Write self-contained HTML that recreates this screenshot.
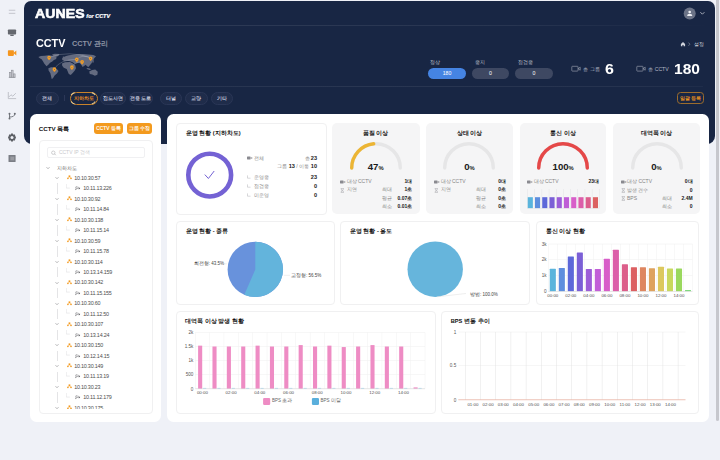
<!DOCTYPE html>
<html><head><meta charset="utf-8">
<style>
*{margin:0;padding:0;box-sizing:border-box}
html,body{width:720px;height:460px;overflow:hidden;background:#eff1f7;font-family:"Liberation Sans",sans-serif;color:#222}
.a{position:absolute}
.t{position:absolute;white-space:nowrap;line-height:1}
#hdr{left:24px;top:1.2px;width:691px;height:143px;background:#182644;border-radius:7px 7px 8px 8px}
.card{position:absolute;background:#fff;border-radius:6.5px}
.sub{position:absolute;background:#fff;border:1px solid #f0f0f1;border-radius:4px}
.gcard{position:absolute;background:#f5f5f6;border-radius:5px}
.pill{position:absolute;white-space:nowrap;height:12.5px;border-radius:7px;background:#1f2c4a;border:0.7px solid #2a3656;color:#dadde5;font-size:5px;font-weight:normal;-webkit-text-stroke:0.1px #dadde5;text-align:center;line-height:11.3px}
.btno{position:absolute;white-space:nowrap;height:11.2px;border-radius:3px;background:#f39a1e;color:#fff;font-size:4.8px;font-weight:normal;-webkit-text-stroke:0.15px #fff;text-align:center;line-height:11.8px}
.tree{position:absolute;font-size:5.6px;color:#555}
.ttl{position:absolute;font-size:6.5px;font-weight:bold;color:#111;white-space:nowrap;line-height:1}
</style></head><body>
<!-- sidebar -->
<svg class="a" style="left:0;top:0" width="24" height="180">
 <rect x="8.8" y="9.7" width="6.5" height="1.2" fill="#cbcdd4"/>
 <rect x="8.8" y="12.8" width="6.5" height="1.2" fill="#cbcdd4"/>
 <rect x="7.9" y="29.4" width="8.2" height="5.2" rx="0.8" fill="#65686f"/>
 <rect x="10.3" y="34.6" width="3.4" height="1.4" fill="#65686f"/>
 <rect x="7.9" y="50.3" width="6" height="5.6" rx="0.8" fill="#f5961e"/>
 <path d="M13.5 53.1 L16.3 50.6 L16.3 55.6 Z" fill="#f5961e"/>
 <path d="M8.8 77.4 H15.3" stroke="#8a8d94" stroke-width="0.7"/>
 <rect x="9.5" y="72.6" width="1.6" height="4.6" stroke="#8a8d94" stroke-width="0.6" fill="#c9cbd1"/>
 <rect x="11.5" y="70.2" width="1.6" height="7" stroke="#8a8d94" stroke-width="0.6" fill="#c9cbd1"/>
 <rect x="13.5" y="73.9" width="1.6" height="3.3" stroke="#8a8d94" stroke-width="0.6" fill="#c9cbd1"/>
 <path d="M8.3 92 V98.6 H16.1 M8.8 97 L11 94.8 L12.8 96.2 L15.8 93.2" stroke="#b5b8bf" stroke-width="0.8" fill="none"/>
 <circle cx="9.5" cy="113.8" r="1" fill="#6b6e75"/><circle cx="9.5" cy="118.5" r="1" fill="#6b6e75"/><circle cx="14.8" cy="113.8" r="1" fill="#6b6e75"/>
 <path d="M9.5 113.8 V118.5 M9.5 117 Q14.8 117 14.8 113.8" stroke="#6b6e75" stroke-width="0.9" fill="none"/>
 <g transform="translate(12 137.5)"><path d="M-0.9 -3.9 H0.9 L1.2 -2.8 L2.3 -3.3 L3.3 -2.3 L2.8 -1.2 L3.9 -0.9 V0.9 L2.8 1.2 L3.3 2.3 L2.3 3.3 L1.2 2.8 L0.9 3.9 H-0.9 L-1.2 2.8 L-2.3 3.3 L-3.3 2.3 L-2.8 1.2 L-3.9 0.9 V-0.9 L-2.8 -1.2 L-3.3 -2.3 L-2.3 -3.3 L-1.2 -2.8 Z" fill="#5d6066"/><circle r="1.5" fill="#eff1f7"/></g>
 <rect x="8.5" y="155" width="7.1" height="7" rx="0.6" fill="#7b7e85"/>
 <rect x="10.3" y="156.6" width="4" height="3.8" fill="#9a9ca2"/>
</svg>
<!-- scrollbar -->
<div class="a" style="left:716.1px;top:-3px;width:2.6px;height:424px;background:#c6c7cd;border-radius:2px"></div>

<div id="hdr" class="a"></div>

<!-- header contents -->
<div class="t" style="left:35px;top:8.2px;font-size:12.8px;font-weight:bold;color:#fff;letter-spacing:0.1px;-webkit-text-stroke:0.6px #fff;transform:scaleX(1.1);transform-origin:left">AUNES</div>
<div class="t" style="left:86.3px;top:13.6px;font-size:5.5px;font-weight:bold;font-style:italic;color:#fff;-webkit-text-stroke:0.2px #fff">for CCTV</div>
<div class="a" style="left:28px;top:25px;width:683px;height:0.8px;background:linear-gradient(90deg,rgba(255,255,255,0.03),rgba(255,255,255,0.085) 30%,rgba(255,255,255,0.07) 70%,rgba(255,255,255,0))"></div>
<svg class="a" style="left:680px;top:5px" width="30" height="18">
 <circle cx="9.7" cy="8.4" r="6" fill="#6b7387"/>
 <circle cx="9.7" cy="7" r="1.35" fill="#eceef3"/>
 <path d="M7.1 10.9 Q7.1 8.8 9.7 8.8 Q12.3 8.8 12.3 10.9 Z" fill="#eceef3"/>
 <path d="M20.4 7.2 L22.4 9.2 L24.4 7.2" stroke="#a9aebb" stroke-width="1" fill="none"/>
</svg>
<div class="t" style="left:36.2px;top:38.8px;font-size:10.4px;font-weight:bold;color:#fff;transform:scaleX(1.04);transform-origin:left">CCTV</div>
<div class="t" style="left:72px;top:40.4px;font-size:7.3px;color:#8e94a4;font-weight:bold">CCTV 관리</div>
<svg class="a" style="left:679px;top:40px" width="12" height="8">
 <path d="M1.9 3.9 L4 1.9 L6.1 3.9 V6.3 H4.6 V5 H3.4 V6.3 H1.9 Z" fill="#d0d3dc"/>
 <path d="M9.5 2.6 L10.9 4.2 L9.5 5.8" stroke="#9aa0ae" stroke-width="0.6" fill="none"/>
</svg>
<div class="t" style="left:694.3px;top:41.5px;font-size:5px;color:#d4d7df">설정</div>
<!-- world map -->
<svg class="a" style="left:34px;top:50px" width="70" height="32" viewBox="0 0 720 329">
<g fill="#646b80"><path d="M45 72 L70 62 L110 58 L150 54 L190 60 L212 62 L232 72 L228 92 L205 104 L188 118 L165 132 L150 148 L135 162 L128 168 L118 155 L105 138 L92 115 L78 96 L60 84 Z"/><path d="M185 45 L215 38 L262 40 L250 62 L222 72 L200 62 Z"/><path d="M148 188 L175 178 L205 178 L235 195 L252 215 L238 238 L212 262 L195 290 L182 298 L175 268 L168 238 L150 210 Z"/><path d="M288 90 L300 74 L330 62 L360 55 L400 50 L450 44 L500 42 L560 46 L610 52 L638 64 L620 84 L605 108 L592 136 L575 158 L560 176 L545 166 L532 152 L515 165 L500 176 L486 152 L466 132 L440 136 L418 142 L398 126 L370 116 L342 110 L312 114 L292 104 Z"/><path d="M288 138 L318 126 L370 124 L400 138 L424 158 L432 188 L418 214 L398 236 L378 256 L358 248 L346 218 L336 196 L306 182 L290 162 Z"/><path d="M568 222 L598 206 L630 200 L656 224 L652 254 L626 266 L600 252 L574 246 Z"/><path d="M598 92 L612 96 L614 126 L604 134 Z"/><path d="M540 185 L565 188 L590 198 L570 205 L545 196 Z"/><path d="M295 70 L308 66 L310 80 L298 84 Z"/></g>
<g stroke="rgba(255,255,255,0.5)" stroke-width="4" fill="none">
<path d="M155 75 Q360 0 582 80"/>
<path d="M210 195 Q260 100 440 95"/>
<path d="M390 175 Q420 120 495 120"/>
<path d="M440 95 Q500 40 582 80"/>
</g>
<path d="M155 106 C143 92 136 86 136 77 A19 19 0 0 1 174 77 C174 86 167 92 155 106 Z" fill="#f39a1e"/><circle cx="155" cy="77" r="10" fill="#f6b34e"/><circle cx="155" cy="77" r="5.5" fill="#6e5a3a"/><path d="M210 226 C198 212 191 206 191 197 A19 19 0 0 1 229 197 C229 206 222 212 210 226 Z" fill="#f39a1e"/><circle cx="210" cy="197" r="10" fill="#f6b34e"/><circle cx="210" cy="197" r="5.5" fill="#6e5a3a"/><path d="M390 206 C378 192 371 186 371 177 A19 19 0 0 1 409 177 C409 186 402 192 390 206 Z" fill="#f39a1e"/><circle cx="390" cy="177" r="10" fill="#f6b34e"/><circle cx="390" cy="177" r="5.5" fill="#6e5a3a"/><path d="M440 126 C428 112 421 106 421 97 A19 19 0 0 1 459 97 C459 106 452 112 440 126 Z" fill="#f39a1e"/><circle cx="440" cy="97" r="10" fill="#f6b34e"/><circle cx="440" cy="97" r="5.5" fill="#6e5a3a"/><path d="M495 151 C483 137 476 131 476 122 A19 19 0 0 1 514 122 C514 131 507 137 495 151 Z" fill="#f39a1e"/><circle cx="495" cy="122" r="10" fill="#f6b34e"/><circle cx="495" cy="122" r="5.5" fill="#6e5a3a"/><path d="M582 114 C570 100 563 94 563 85 A19 19 0 0 1 601 85 C601 94 594 100 582 114 Z" fill="#f39a1e"/><circle cx="582" cy="85" r="10" fill="#f6b34e"/><circle cx="582" cy="85" r="5.5" fill="#6e5a3a"/>
</svg>
<!-- status pills -->
<div class="t" style="left:430px;top:59.8px;font-size:5px;color:#c4c8d2">정상</div>
<div class="t" style="left:474.5px;top:59.8px;font-size:5px;color:#c4c8d2">중지</div>
<div class="t" style="left:518px;top:59.8px;font-size:5px;color:#c4c8d2">점검중</div>
<div class="a" style="left:428.2px;top:68.1px;width:37.7px;height:10.7px;border-radius:6px;background:#4584e3;color:#fff;font-size:5.2px;text-align:center;line-height:10.7px">180</div>
<div class="a" style="left:471.7px;top:68.1px;width:37.4px;height:10.7px;border-radius:6px;background:#3e4862;color:#fff;font-size:5.2px;text-align:center;line-height:10.7px">0</div>
<div class="a" style="left:515.1px;top:68.1px;width:37.8px;height:10.7px;border-radius:6px;background:#3e4862;color:#fff;font-size:5.2px;text-align:center;line-height:10.7px">0</div>
<svg class="a" style="left:570px;top:64px" width="12" height="10">
 <rect x="1.8" y="2.3" width="6.2" height="4.8" rx="0.6" stroke="#a6abb8" stroke-width="0.6" fill="none"/>
 <path d="M8 4.7 L10.2 3.2 V6.2 Z" stroke="#a6abb8" stroke-width="0.6" fill="none"/>
</svg>
<div class="t" style="left:583.3px;top:66.6px;font-size:5.2px;color:#b5b9c5">총 그룹</div>
<div class="t" style="left:604.7px;top:62px;font-size:14.5px;font-weight:bold;color:#fff;transform:scaleX(1.1);transform-origin:left">6</div>
<svg class="a" style="left:634.5px;top:64px" width="12" height="10">
 <rect x="1.8" y="2.3" width="6.2" height="4.8" rx="0.6" stroke="#a6abb8" stroke-width="0.6" fill="none"/>
 <path d="M8 4.7 L10.2 3.2 V6.2 Z" stroke="#a6abb8" stroke-width="0.6" fill="none"/>
</svg>
<div class="t" style="left:648.2px;top:66.6px;font-size:5.2px;color:#b5b9c5">총 CCTV</div>
<div class="t" style="left:673.7px;top:62px;font-size:14.5px;font-weight:bold;color:#fff;transform:scaleX(1.07);transform-origin:left">180</div>
<div class="a" style="left:30px;top:86px;width:673px;height:1px;background:linear-gradient(90deg,rgba(255,255,255,0.06),rgba(255,255,255,0.075) 50%,rgba(255,255,255,0.06) 90%,rgba(255,255,255,0.03))"></div>
<!-- tabs -->
<div class="pill" style="left:36.2px;top:92.2px;width:22.5px">전체</div>
<div class="a" style="left:64.2px;top:95.2px;width:0.5px;height:6.2px;background:#2c3757"></div>
<div class="pill" style="left:70.1px;top:91.9px;width:28.2px;height:12.8px;border:1.1px solid #c8822a;color:#ee8d20;line-height:10.8px;background:#182644;font-weight:bold;-webkit-text-stroke:0">지하차도</div>
<svg class="a" style="left:68px;top:90px" width="33" height="17"><defs><filter id="gl" x="-50%" y="-50%" width="200%" height="200%"><feGaussianBlur stdDeviation="0.5"/></filter></defs>
<g stroke="#f3d69a" stroke-width="1.1" fill="none" filter="url(#gl)" opacity="0.9">
<path d="M6.6 2.6 A5.6 5.6 0 0 0 3.1 5"/><path d="M3.1 11.5 A5.6 5.6 0 0 0 6.6 14"/>
<path d="M23.7 2.6 A5.6 5.6 0 0 1 27.2 5"/><path d="M27.2 11.5 A5.6 5.6 0 0 1 23.7 14"/>
</g></svg>
<div class="pill" style="left:99.9px;top:92.2px;width:25.9px">접도사면</div>
<div class="pill" style="left:129px;top:92.2px;width:23.5px">전용 도로</div>
<div class="pill" style="left:159.5px;top:92.2px;width:22.2px">터널</div>
<div class="pill" style="left:185px;top:92.2px;width:22.5px">교량</div>
<div class="pill" style="left:210.5px;top:92.2px;width:22.5px">기타</div>
<div class="a" style="left:677px;top:92px;width:26.6px;height:11.9px;border:0.8px solid #9c6c2c;border-radius:3.5px;color:#e8901e;font-size:5px;font-weight:bold;white-space:nowrap;text-align:center;line-height:10.6px">일괄 등록</div>

<!-- left card -->
<div class="card" style="left:30px;top:114.4px;width:131px;height:307.7px"></div>
<div class="ttl" style="left:38.8px;top:125.6px;font-size:6.2px">CCTV 목록</div>
<div class="btno" style="left:94px;top:123.3px;width:29.1px">CCTV 등록</div>
<div class="btno" style="left:126.7px;top:123.3px;width:25.6px">그룹 수정</div>
<div class="sub" style="left:38.9px;top:140px;width:114px;height:274.2px"></div>
<div class="a" style="left:47.2px;top:147.4px;width:97.4px;height:10.3px;border:0.7px solid #f0f0f2;border-radius:2px"></div>
<svg class="a" style="left:50px;top:149.5px" width="8" height="7"><circle cx="3.3" cy="2.7" r="1.7" stroke="#b0b0b4" stroke-width="0.6" fill="none"/><path d="M4.5 3.9 L5.8 5.2" stroke="#b0b0b4" stroke-width="0.7"/></svg>
<div class="t" style="left:58.9px;top:150.4px;font-size:5px;color:#c9c9cd">CCTV IP 검색</div>
<div class="a" style="left:40px;top:160px;width:111px;height:249px;overflow:hidden">
<svg class="a" style="left:6.35px;top:5.70px" width="4" height="4"><path d="M0.5 1.2 L2 2.7 L3.5 1.2" stroke="#77777b" stroke-width="0.55" fill="none"/></svg>
<div class="t" style="left:17.299999999999997px;top:5.55px;font-size:5px;color:#666">지하차도</div>
<svg class="a" style="left:15.45px;top:16.15px" width="4" height="4"><path d="M0.5 1.2 L2 2.7 L3.5 1.2" stroke="#77777b" stroke-width="0.55" fill="none"/></svg>
<svg class="a" style="left:26.5px;top:15.35px" width="5" height="5"><rect x="1.6" y="0.4" width="1.7" height="1.6" fill="#f39a1e"/><circle cx="0.9" cy="3.4" r="0.8" fill="#f39a1e"/><circle cx="4" cy="3.4" r="0.8" fill="#f39a1e"/><path d="M2.45 1.8 L0.9 3.4 M2.45 1.8 L4 3.4" stroke="#f39a1e" stroke-width="0.5"/></svg>
<div class="t" style="left:34.2px;top:15.90px;font-size:5.4px;letter-spacing:-0.22px;color:#4d4d4d">10.10.30.57</div>
<div class="a" style="left:17.15px;top:23.40px;width:0.6px;height:10.45px;background:#e4e4e6"></div>
<svg class="a" style="left:26.099999999999994px;top:23.90px" width="5" height="5"><path d="M0.3 0 V4.1 H3.8" stroke="#d8d8da" stroke-width="0.5" fill="none"/></svg>
<svg class="a" style="left:35.3px;top:26.30px" width="6" height="5"><path d="M1 0.6 L4.2 1.6 L3.8 2.9 L0.6 1.9 Z" stroke="#6a6a6e" stroke-width="0.45" fill="none"/><path d="M4.1 2 L5.1 1.7 L5 3.2 L3.9 2.8" fill="#6a6a6e"/><path d="M1.8 2.3 L1.4 3.4 H0.4 M0.4 2.6 V4.1" stroke="#6a6a6e" stroke-width="0.45" fill="none"/></svg>
<div class="t" style="left:43.2px;top:26.35px;font-size:5.4px;letter-spacing:-0.22px;color:#4d4d4d">10.11.13.226</div>
<svg class="a" style="left:15.45px;top:37.05px" width="4" height="4"><path d="M0.5 1.2 L2 2.7 L3.5 1.2" stroke="#77777b" stroke-width="0.55" fill="none"/></svg>
<svg class="a" style="left:26.5px;top:36.25px" width="5" height="5"><rect x="1.6" y="0.4" width="1.7" height="1.6" fill="#f39a1e"/><circle cx="0.9" cy="3.4" r="0.8" fill="#f39a1e"/><circle cx="4" cy="3.4" r="0.8" fill="#f39a1e"/><path d="M2.45 1.8 L0.9 3.4 M2.45 1.8 L4 3.4" stroke="#f39a1e" stroke-width="0.5"/></svg>
<div class="t" style="left:34.2px;top:36.80px;font-size:5.4px;letter-spacing:-0.22px;color:#4d4d4d">10.10.30.92</div>
<div class="a" style="left:17.15px;top:44.30px;width:0.6px;height:10.45px;background:#e4e4e6"></div>
<svg class="a" style="left:26.099999999999994px;top:44.80px" width="5" height="5"><path d="M0.3 0 V4.1 H3.8" stroke="#d8d8da" stroke-width="0.5" fill="none"/></svg>
<svg class="a" style="left:35.3px;top:47.20px" width="6" height="5"><path d="M1 0.6 L4.2 1.6 L3.8 2.9 L0.6 1.9 Z" stroke="#6a6a6e" stroke-width="0.45" fill="none"/><path d="M4.1 2 L5.1 1.7 L5 3.2 L3.9 2.8" fill="#6a6a6e"/><path d="M1.8 2.3 L1.4 3.4 H0.4 M0.4 2.6 V4.1" stroke="#6a6a6e" stroke-width="0.45" fill="none"/></svg>
<div class="t" style="left:43.2px;top:47.25px;font-size:5.4px;letter-spacing:-0.22px;color:#4d4d4d">10.11.14.84</div>
<svg class="a" style="left:15.45px;top:57.95px" width="4" height="4"><path d="M0.5 1.2 L2 2.7 L3.5 1.2" stroke="#77777b" stroke-width="0.55" fill="none"/></svg>
<svg class="a" style="left:26.5px;top:57.15px" width="5" height="5"><rect x="1.6" y="0.4" width="1.7" height="1.6" fill="#f39a1e"/><circle cx="0.9" cy="3.4" r="0.8" fill="#f39a1e"/><circle cx="4" cy="3.4" r="0.8" fill="#f39a1e"/><path d="M2.45 1.8 L0.9 3.4 M2.45 1.8 L4 3.4" stroke="#f39a1e" stroke-width="0.5"/></svg>
<div class="t" style="left:34.2px;top:57.70px;font-size:5.4px;letter-spacing:-0.22px;color:#4d4d4d">10.10.30.138</div>
<div class="a" style="left:17.15px;top:65.20px;width:0.6px;height:10.45px;background:#e4e4e6"></div>
<svg class="a" style="left:26.099999999999994px;top:65.70px" width="5" height="5"><path d="M0.3 0 V4.1 H3.8" stroke="#d8d8da" stroke-width="0.5" fill="none"/></svg>
<svg class="a" style="left:35.3px;top:68.10px" width="6" height="5"><path d="M1 0.6 L4.2 1.6 L3.8 2.9 L0.6 1.9 Z" stroke="#6a6a6e" stroke-width="0.45" fill="none"/><path d="M4.1 2 L5.1 1.7 L5 3.2 L3.9 2.8" fill="#6a6a6e"/><path d="M1.8 2.3 L1.4 3.4 H0.4 M0.4 2.6 V4.1" stroke="#6a6a6e" stroke-width="0.45" fill="none"/></svg>
<div class="t" style="left:43.2px;top:68.15px;font-size:5.4px;letter-spacing:-0.22px;color:#4d4d4d">10.11.15.14</div>
<svg class="a" style="left:15.45px;top:78.85px" width="4" height="4"><path d="M0.5 1.2 L2 2.7 L3.5 1.2" stroke="#77777b" stroke-width="0.55" fill="none"/></svg>
<svg class="a" style="left:26.5px;top:78.05px" width="5" height="5"><rect x="1.6" y="0.4" width="1.7" height="1.6" fill="#f39a1e"/><circle cx="0.9" cy="3.4" r="0.8" fill="#f39a1e"/><circle cx="4" cy="3.4" r="0.8" fill="#f39a1e"/><path d="M2.45 1.8 L0.9 3.4 M2.45 1.8 L4 3.4" stroke="#f39a1e" stroke-width="0.5"/></svg>
<div class="t" style="left:34.2px;top:78.60px;font-size:5.4px;letter-spacing:-0.22px;color:#4d4d4d">10.10.30.59</div>
<div class="a" style="left:17.15px;top:86.10px;width:0.6px;height:10.45px;background:#e4e4e6"></div>
<svg class="a" style="left:26.099999999999994px;top:86.60px" width="5" height="5"><path d="M0.3 0 V4.1 H3.8" stroke="#d8d8da" stroke-width="0.5" fill="none"/></svg>
<svg class="a" style="left:35.3px;top:89.00px" width="6" height="5"><path d="M1 0.6 L4.2 1.6 L3.8 2.9 L0.6 1.9 Z" stroke="#6a6a6e" stroke-width="0.45" fill="none"/><path d="M4.1 2 L5.1 1.7 L5 3.2 L3.9 2.8" fill="#6a6a6e"/><path d="M1.8 2.3 L1.4 3.4 H0.4 M0.4 2.6 V4.1" stroke="#6a6a6e" stroke-width="0.45" fill="none"/></svg>
<div class="t" style="left:43.2px;top:89.05px;font-size:5.4px;letter-spacing:-0.22px;color:#4d4d4d">10.11.15.78</div>
<svg class="a" style="left:15.45px;top:99.75px" width="4" height="4"><path d="M0.5 1.2 L2 2.7 L3.5 1.2" stroke="#77777b" stroke-width="0.55" fill="none"/></svg>
<svg class="a" style="left:26.5px;top:98.95px" width="5" height="5"><rect x="1.6" y="0.4" width="1.7" height="1.6" fill="#f39a1e"/><circle cx="0.9" cy="3.4" r="0.8" fill="#f39a1e"/><circle cx="4" cy="3.4" r="0.8" fill="#f39a1e"/><path d="M2.45 1.8 L0.9 3.4 M2.45 1.8 L4 3.4" stroke="#f39a1e" stroke-width="0.5"/></svg>
<div class="t" style="left:34.2px;top:99.50px;font-size:5.4px;letter-spacing:-0.22px;color:#4d4d4d">10.10.30.114</div>
<div class="a" style="left:17.15px;top:107.00px;width:0.6px;height:10.45px;background:#e4e4e6"></div>
<svg class="a" style="left:26.099999999999994px;top:107.50px" width="5" height="5"><path d="M0.3 0 V4.1 H3.8" stroke="#d8d8da" stroke-width="0.5" fill="none"/></svg>
<svg class="a" style="left:35.3px;top:109.90px" width="6" height="5"><path d="M1 0.6 L4.2 1.6 L3.8 2.9 L0.6 1.9 Z" stroke="#6a6a6e" stroke-width="0.45" fill="none"/><path d="M4.1 2 L5.1 1.7 L5 3.2 L3.9 2.8" fill="#6a6a6e"/><path d="M1.8 2.3 L1.4 3.4 H0.4 M0.4 2.6 V4.1" stroke="#6a6a6e" stroke-width="0.45" fill="none"/></svg>
<div class="t" style="left:43.2px;top:109.95px;font-size:5.4px;letter-spacing:-0.22px;color:#4d4d4d">10.13.14.159</div>
<svg class="a" style="left:15.45px;top:120.65px" width="4" height="4"><path d="M0.5 1.2 L2 2.7 L3.5 1.2" stroke="#77777b" stroke-width="0.55" fill="none"/></svg>
<svg class="a" style="left:26.5px;top:119.85px" width="5" height="5"><rect x="1.6" y="0.4" width="1.7" height="1.6" fill="#f39a1e"/><circle cx="0.9" cy="3.4" r="0.8" fill="#f39a1e"/><circle cx="4" cy="3.4" r="0.8" fill="#f39a1e"/><path d="M2.45 1.8 L0.9 3.4 M2.45 1.8 L4 3.4" stroke="#f39a1e" stroke-width="0.5"/></svg>
<div class="t" style="left:34.2px;top:120.40px;font-size:5.4px;letter-spacing:-0.22px;color:#4d4d4d">10.10.30.142</div>
<div class="a" style="left:17.15px;top:127.90px;width:0.6px;height:10.45px;background:#e4e4e6"></div>
<svg class="a" style="left:26.099999999999994px;top:128.40px" width="5" height="5"><path d="M0.3 0 V4.1 H3.8" stroke="#d8d8da" stroke-width="0.5" fill="none"/></svg>
<svg class="a" style="left:35.3px;top:130.80px" width="6" height="5"><path d="M1 0.6 L4.2 1.6 L3.8 2.9 L0.6 1.9 Z" stroke="#6a6a6e" stroke-width="0.45" fill="none"/><path d="M4.1 2 L5.1 1.7 L5 3.2 L3.9 2.8" fill="#6a6a6e"/><path d="M1.8 2.3 L1.4 3.4 H0.4 M0.4 2.6 V4.1" stroke="#6a6a6e" stroke-width="0.45" fill="none"/></svg>
<div class="t" style="left:43.2px;top:130.85px;font-size:5.4px;letter-spacing:-0.22px;color:#4d4d4d">10.11.15.155</div>
<svg class="a" style="left:15.45px;top:141.55px" width="4" height="4"><path d="M0.5 1.2 L2 2.7 L3.5 1.2" stroke="#77777b" stroke-width="0.55" fill="none"/></svg>
<svg class="a" style="left:26.5px;top:140.75px" width="5" height="5"><rect x="1.6" y="0.4" width="1.7" height="1.6" fill="#f39a1e"/><circle cx="0.9" cy="3.4" r="0.8" fill="#f39a1e"/><circle cx="4" cy="3.4" r="0.8" fill="#f39a1e"/><path d="M2.45 1.8 L0.9 3.4 M2.45 1.8 L4 3.4" stroke="#f39a1e" stroke-width="0.5"/></svg>
<div class="t" style="left:34.2px;top:141.30px;font-size:5.4px;letter-spacing:-0.22px;color:#4d4d4d">10.10.30.60</div>
<div class="a" style="left:17.15px;top:148.80px;width:0.6px;height:10.45px;background:#e4e4e6"></div>
<svg class="a" style="left:26.099999999999994px;top:149.30px" width="5" height="5"><path d="M0.3 0 V4.1 H3.8" stroke="#d8d8da" stroke-width="0.5" fill="none"/></svg>
<svg class="a" style="left:35.3px;top:151.70px" width="6" height="5"><path d="M1 0.6 L4.2 1.6 L3.8 2.9 L0.6 1.9 Z" stroke="#6a6a6e" stroke-width="0.45" fill="none"/><path d="M4.1 2 L5.1 1.7 L5 3.2 L3.9 2.8" fill="#6a6a6e"/><path d="M1.8 2.3 L1.4 3.4 H0.4 M0.4 2.6 V4.1" stroke="#6a6a6e" stroke-width="0.45" fill="none"/></svg>
<div class="t" style="left:43.2px;top:151.75px;font-size:5.4px;letter-spacing:-0.22px;color:#4d4d4d">10.11.12.50</div>
<svg class="a" style="left:15.45px;top:162.45px" width="4" height="4"><path d="M0.5 1.2 L2 2.7 L3.5 1.2" stroke="#77777b" stroke-width="0.55" fill="none"/></svg>
<svg class="a" style="left:26.5px;top:161.65px" width="5" height="5"><rect x="1.6" y="0.4" width="1.7" height="1.6" fill="#f39a1e"/><circle cx="0.9" cy="3.4" r="0.8" fill="#f39a1e"/><circle cx="4" cy="3.4" r="0.8" fill="#f39a1e"/><path d="M2.45 1.8 L0.9 3.4 M2.45 1.8 L4 3.4" stroke="#f39a1e" stroke-width="0.5"/></svg>
<div class="t" style="left:34.2px;top:162.20px;font-size:5.4px;letter-spacing:-0.22px;color:#4d4d4d">10.10.30.107</div>
<div class="a" style="left:17.15px;top:169.70px;width:0.6px;height:10.45px;background:#e4e4e6"></div>
<svg class="a" style="left:26.099999999999994px;top:170.20px" width="5" height="5"><path d="M0.3 0 V4.1 H3.8" stroke="#d8d8da" stroke-width="0.5" fill="none"/></svg>
<svg class="a" style="left:35.3px;top:172.60px" width="6" height="5"><path d="M1 0.6 L4.2 1.6 L3.8 2.9 L0.6 1.9 Z" stroke="#6a6a6e" stroke-width="0.45" fill="none"/><path d="M4.1 2 L5.1 1.7 L5 3.2 L3.9 2.8" fill="#6a6a6e"/><path d="M1.8 2.3 L1.4 3.4 H0.4 M0.4 2.6 V4.1" stroke="#6a6a6e" stroke-width="0.45" fill="none"/></svg>
<div class="t" style="left:43.2px;top:172.65px;font-size:5.4px;letter-spacing:-0.22px;color:#4d4d4d">10.13.14.24</div>
<svg class="a" style="left:15.45px;top:183.35px" width="4" height="4"><path d="M0.5 1.2 L2 2.7 L3.5 1.2" stroke="#77777b" stroke-width="0.55" fill="none"/></svg>
<svg class="a" style="left:26.5px;top:182.55px" width="5" height="5"><rect x="1.6" y="0.4" width="1.7" height="1.6" fill="#f39a1e"/><circle cx="0.9" cy="3.4" r="0.8" fill="#f39a1e"/><circle cx="4" cy="3.4" r="0.8" fill="#f39a1e"/><path d="M2.45 1.8 L0.9 3.4 M2.45 1.8 L4 3.4" stroke="#f39a1e" stroke-width="0.5"/></svg>
<div class="t" style="left:34.2px;top:183.10px;font-size:5.4px;letter-spacing:-0.22px;color:#4d4d4d">10.10.30.150</div>
<div class="a" style="left:17.15px;top:190.60px;width:0.6px;height:10.45px;background:#e4e4e6"></div>
<svg class="a" style="left:26.099999999999994px;top:191.10px" width="5" height="5"><path d="M0.3 0 V4.1 H3.8" stroke="#d8d8da" stroke-width="0.5" fill="none"/></svg>
<svg class="a" style="left:35.3px;top:193.50px" width="6" height="5"><path d="M1 0.6 L4.2 1.6 L3.8 2.9 L0.6 1.9 Z" stroke="#6a6a6e" stroke-width="0.45" fill="none"/><path d="M4.1 2 L5.1 1.7 L5 3.2 L3.9 2.8" fill="#6a6a6e"/><path d="M1.8 2.3 L1.4 3.4 H0.4 M0.4 2.6 V4.1" stroke="#6a6a6e" stroke-width="0.45" fill="none"/></svg>
<div class="t" style="left:43.2px;top:193.55px;font-size:5.4px;letter-spacing:-0.22px;color:#4d4d4d">10.12.14.15</div>
<svg class="a" style="left:15.45px;top:204.25px" width="4" height="4"><path d="M0.5 1.2 L2 2.7 L3.5 1.2" stroke="#77777b" stroke-width="0.55" fill="none"/></svg>
<svg class="a" style="left:26.5px;top:203.45px" width="5" height="5"><rect x="1.6" y="0.4" width="1.7" height="1.6" fill="#f39a1e"/><circle cx="0.9" cy="3.4" r="0.8" fill="#f39a1e"/><circle cx="4" cy="3.4" r="0.8" fill="#f39a1e"/><path d="M2.45 1.8 L0.9 3.4 M2.45 1.8 L4 3.4" stroke="#f39a1e" stroke-width="0.5"/></svg>
<div class="t" style="left:34.2px;top:204.00px;font-size:5.4px;letter-spacing:-0.22px;color:#4d4d4d">10.10.30.149</div>
<div class="a" style="left:17.15px;top:211.50px;width:0.6px;height:10.45px;background:#e4e4e6"></div>
<svg class="a" style="left:26.099999999999994px;top:212.00px" width="5" height="5"><path d="M0.3 0 V4.1 H3.8" stroke="#d8d8da" stroke-width="0.5" fill="none"/></svg>
<svg class="a" style="left:35.3px;top:214.40px" width="6" height="5"><path d="M1 0.6 L4.2 1.6 L3.8 2.9 L0.6 1.9 Z" stroke="#6a6a6e" stroke-width="0.45" fill="none"/><path d="M4.1 2 L5.1 1.7 L5 3.2 L3.9 2.8" fill="#6a6a6e"/><path d="M1.8 2.3 L1.4 3.4 H0.4 M0.4 2.6 V4.1" stroke="#6a6a6e" stroke-width="0.45" fill="none"/></svg>
<div class="t" style="left:43.2px;top:214.45px;font-size:5.4px;letter-spacing:-0.22px;color:#4d4d4d">10.11.13.19</div>
<svg class="a" style="left:15.45px;top:225.15px" width="4" height="4"><path d="M0.5 1.2 L2 2.7 L3.5 1.2" stroke="#77777b" stroke-width="0.55" fill="none"/></svg>
<svg class="a" style="left:26.5px;top:224.35px" width="5" height="5"><rect x="1.6" y="0.4" width="1.7" height="1.6" fill="#f39a1e"/><circle cx="0.9" cy="3.4" r="0.8" fill="#f39a1e"/><circle cx="4" cy="3.4" r="0.8" fill="#f39a1e"/><path d="M2.45 1.8 L0.9 3.4 M2.45 1.8 L4 3.4" stroke="#f39a1e" stroke-width="0.5"/></svg>
<div class="t" style="left:34.2px;top:224.90px;font-size:5.4px;letter-spacing:-0.22px;color:#4d4d4d">10.10.30.23</div>
<div class="a" style="left:17.15px;top:232.40px;width:0.6px;height:10.45px;background:#e4e4e6"></div>
<svg class="a" style="left:26.099999999999994px;top:232.90px" width="5" height="5"><path d="M0.3 0 V4.1 H3.8" stroke="#d8d8da" stroke-width="0.5" fill="none"/></svg>
<svg class="a" style="left:35.3px;top:235.30px" width="6" height="5"><path d="M1 0.6 L4.2 1.6 L3.8 2.9 L0.6 1.9 Z" stroke="#6a6a6e" stroke-width="0.45" fill="none"/><path d="M4.1 2 L5.1 1.7 L5 3.2 L3.9 2.8" fill="#6a6a6e"/><path d="M1.8 2.3 L1.4 3.4 H0.4 M0.4 2.6 V4.1" stroke="#6a6a6e" stroke-width="0.45" fill="none"/></svg>
<div class="t" style="left:43.2px;top:235.35px;font-size:5.4px;letter-spacing:-0.22px;color:#4d4d4d">10.11.12.179</div>
<svg class="a" style="left:15.45px;top:246.05px" width="4" height="4"><path d="M0.5 1.2 L2 2.7 L3.5 1.2" stroke="#77777b" stroke-width="0.55" fill="none"/></svg>
<svg class="a" style="left:26.5px;top:245.25px" width="5" height="5"><rect x="1.6" y="0.4" width="1.7" height="1.6" fill="#f39a1e"/><circle cx="0.9" cy="3.4" r="0.8" fill="#f39a1e"/><circle cx="4" cy="3.4" r="0.8" fill="#f39a1e"/><path d="M2.45 1.8 L0.9 3.4 M2.45 1.8 L4 3.4" stroke="#f39a1e" stroke-width="0.5"/></svg>
<div class="t" style="left:34.2px;top:245.80px;font-size:5.4px;letter-spacing:-0.22px;color:#4d4d4d">10.10.30.175</div>
</div>
<!-- right card -->
<div class="card" style="left:166.9px;top:113.6px;width:542px;height:308.6px"></div>
<!-- right content -->
<div class="sub" style="left:176.2px;top:123px;width:151px;height:92.2px"></div>
<div class="ttl" style="left:185.7px;top:131.10px;font-size:5.7px">운영 현황 (지하차도)</div>
<svg class="a" style="left:184px;top:149px" width="52" height="52">
<circle cx="25.7" cy="26.1" r="21.4" stroke="#7462d4" stroke-width="4.6" fill="none"/>
<path d="M20.8 25.6 L24.4 29.5 L30.2 22" stroke="#7462d4" stroke-width="1" fill="none"/>
</svg>
<svg class="a" style="left:247.3px;top:156.0px" width="6" height="4"><rect x="0" y="0.6" width="3.6" height="2.8" rx="0.4" fill="#8a8a90"/><path d="M3.6 2 L5.2 1 V3 Z" fill="#8a8a90"/></svg>
<div class="t" style="left:254.20px;top:155.75px;font-size:5.3px;color:#808080;">전체</div>
<div class="t" style="left:304.70px;top:155.75px;font-size:5.3px;color:#858585;">총</div>
<div class="t" style="right:403.00px;top:155.50px;font-size:5.6px;color:#222;font-weight:bold;">23</div>
<div class="t" style="right:403px;top:164.40px;font-size:5.3px;color:#858585">그룹 <b style="color:#222;font-size:5.6px">13</b> / 이동 <b style="color:#222;font-size:5.6px">10</b></div>
<svg class="a" style="left:247.4px;top:175.4px" width="5" height="4"><path d="M0.5 0.4 V3.2 H3.5" stroke="#b0b0b4" stroke-width="0.5" fill="none"/></svg>
<div class="t" style="left:253.90px;top:175.15px;font-size:5.3px;color:#858585;">운영중</div>
<div class="t" style="right:403.00px;top:174.90px;font-size:5.6px;color:#222;font-weight:bold;">23</div>
<svg class="a" style="left:247.4px;top:184.0px" width="5" height="4"><path d="M0.5 0.4 V3.2 H3.5" stroke="#b0b0b4" stroke-width="0.5" fill="none"/></svg>
<div class="t" style="left:253.90px;top:183.75px;font-size:5.3px;color:#858585;">점검중</div>
<div class="t" style="right:403.00px;top:183.50px;font-size:5.6px;color:#222;font-weight:bold;">0</div>
<svg class="a" style="left:247.4px;top:193.1px" width="5" height="4"><path d="M0.5 0.4 V3.2 H3.5" stroke="#b0b0b4" stroke-width="0.5" fill="none"/></svg>
<div class="t" style="left:253.90px;top:192.85px;font-size:5.3px;color:#858585;">미운영</div>
<div class="t" style="right:403.00px;top:192.60px;font-size:5.6px;color:#222;font-weight:bold;">0</div>
<div class="gcard" style="left:331.9px;top:123.3px;width:87.7px;height:91.1px"></div>
<div class="ttl" style="left:331.9px;width:87.5px;text-align:center;top:130.70px;font-size:5.7px">품질 이상</div>
<svg class="a" style="left:345.65px;top:137.70px" width="60" height="34"><path d="M5.70 30.00 A24.3 24.3 0 0 1 54.30 30.00" stroke="#e6e6e7" stroke-width="3.4" fill="none" stroke-linecap="round"/><path d="M5.70 30.00 A24.3 24.3 0 0 1 27.71 5.81" stroke="#ecb534" stroke-width="3.4" fill="none" stroke-linecap="round"/></svg>
<div class="t" style="left:331.9px;width:87.5px;text-align:center;top:161.8px;font-size:9.6px;font-weight:bold;color:#1a1a1a">47<span style="font-size:5.8px">%</span></div>
<div class="gcard" style="left:425.8px;top:123.3px;width:87.7px;height:91.1px"></div>
<div class="ttl" style="left:425.6px;width:87.7px;text-align:center;top:130.70px;font-size:5.7px">상태 이상</div>
<svg class="a" style="left:439.45px;top:137.70px" width="60" height="34"><path d="M5.70 30.00 A24.3 24.3 0 0 1 54.30 30.00" stroke="#e6e6e7" stroke-width="3.4" fill="none" stroke-linecap="round"/></svg>
<div class="t" style="left:425.6px;width:87.7px;text-align:center;top:161.8px;font-size:9.6px;font-weight:bold;color:#1a1a1a">0<span style="font-size:5.8px">%</span></div>
<div class="gcard" style="left:519.6px;top:123.3px;width:86.9px;height:91.1px"></div>
<div class="ttl" style="left:519.7px;width:87.0px;text-align:center;top:130.70px;font-size:5.7px">통신 이상</div>
<svg class="a" style="left:533.20px;top:137.70px" width="60" height="34"><path d="M5.70 30.00 A24.3 24.3 0 0 1 54.30 30.00" stroke="#e6e6e7" stroke-width="3.4" fill="none" stroke-linecap="round"/><path d="M5.70 30.00 A24.3 24.3 0 0 1 54.30 30.00" stroke="#e54848" stroke-width="3.4" fill="none" stroke-linecap="round"/></svg>
<div class="t" style="left:519.7px;width:87.0px;text-align:center;top:161.8px;font-size:9.6px;font-weight:bold;color:#1a1a1a">100<span style="font-size:5.8px">%</span></div>
<div class="gcard" style="left:612.8px;top:123.3px;width:86.8px;height:91.1px"></div>
<div class="ttl" style="left:613.3px;width:86.4px;text-align:center;top:130.70px;font-size:5.7px">대역폭 이상</div>
<svg class="a" style="left:626.50px;top:137.70px" width="60" height="34"><path d="M5.70 30.00 A24.3 24.3 0 0 1 54.30 30.00" stroke="#e6e6e7" stroke-width="3.4" fill="none" stroke-linecap="round"/></svg>
<div class="t" style="left:613.3px;width:86.4px;text-align:center;top:161.8px;font-size:9.6px;font-weight:bold;color:#1a1a1a">0<span style="font-size:5.8px">%</span></div>
<svg class="a" style="left:340.0px;top:179.5px" width="6" height="4"><rect x="0" y="0.6" width="3.6" height="2.8" rx="0.4" fill="#8a8a90"/><path d="M3.6 2 L5.2 1 V3 Z" fill="#8a8a90"/></svg>
<div class="t" style="left:346.60px;top:179.00px;font-size:5px;color:#858585;">대상 CCTV</div>
<div class="t" style="right:307.70px;top:179.00px;font-size:5px;color:#222;font-weight:bold;">1대</div>
<svg class="a" style="left:340.0px;top:187.5px" width="5" height="5"><path d="M0.8 0.4 H3.8 M0.8 4.4 H3.8 M1.2 0.4 Q1.2 2.4 2.3 2.4 Q3.4 2.4 3.4 0.4 M1.2 4.4 Q1.2 2.4 2.3 2.4 Q3.4 2.4 3.4 4.4" stroke="#9a9aa0" stroke-width="0.45" fill="none"/></svg>
<div class="t" style="left:346.60px;top:187.30px;font-size:5px;color:#858585;">지연</div>
<div class="t" style="left:381.60px;top:187.30px;font-size:5px;color:#858585;">최대</div>
<div class="t" style="right:307.70px;top:187.30px;font-size:5px;color:#222;font-weight:bold;">1초</div>
<div class="t" style="left:381.60px;top:195.80px;font-size:5px;color:#858585;">평균</div>
<div class="t" style="right:307.70px;top:195.80px;font-size:5px;color:#222;font-weight:bold;">0.07초</div>
<div class="t" style="left:381.60px;top:204.00px;font-size:5px;color:#858585;">최소</div>
<div class="t" style="right:307.70px;top:204.00px;font-size:5px;color:#222;font-weight:bold;">0.01초</div>
<svg class="a" style="left:434.0px;top:179.5px" width="6" height="4"><rect x="0" y="0.6" width="3.6" height="2.8" rx="0.4" fill="#8a8a90"/><path d="M3.6 2 L5.2 1 V3 Z" fill="#8a8a90"/></svg>
<div class="t" style="left:440.60px;top:179.00px;font-size:5px;color:#858585;">대상 CCTV</div>
<div class="t" style="right:214.00px;top:179.00px;font-size:5px;color:#222;font-weight:bold;">0대</div>
<svg class="a" style="left:434.0px;top:187.5px" width="5" height="5"><path d="M0.8 0.4 H3.8 M0.8 4.4 H3.8 M1.2 0.4 Q1.2 2.4 2.3 2.4 Q3.4 2.4 3.4 0.4 M1.2 4.4 Q1.2 2.4 2.3 2.4 Q3.4 2.4 3.4 4.4" stroke="#9a9aa0" stroke-width="0.45" fill="none"/></svg>
<div class="t" style="left:440.60px;top:187.30px;font-size:5px;color:#858585;">지연</div>
<div class="t" style="left:475.60px;top:187.30px;font-size:5px;color:#858585;">최대</div>
<div class="t" style="right:214.00px;top:187.30px;font-size:5px;color:#222;font-weight:bold;">0초</div>
<div class="t" style="left:475.60px;top:195.80px;font-size:5px;color:#858585;">평균</div>
<div class="t" style="right:214.00px;top:195.80px;font-size:5px;color:#222;font-weight:bold;">0초</div>
<div class="t" style="left:475.60px;top:204.00px;font-size:5px;color:#858585;">최소</div>
<div class="t" style="right:214.00px;top:204.00px;font-size:5px;color:#222;font-weight:bold;">0초</div>
<svg class="a" style="left:526.9px;top:179.6px" width="6" height="4"><rect x="0" y="0.6" width="3.6" height="2.8" rx="0.4" fill="#8a8a90"/><path d="M3.6 2 L5.2 1 V3 Z" fill="#8a8a90"/></svg>
<div class="t" style="left:533.50px;top:179.10px;font-size:5px;color:#858585;">대상 CCTV</div>
<div class="t" style="right:121.00px;top:179.10px;font-size:5px;color:#222;font-weight:bold;">23대</div>

<svg class="a" style="left:527px;top:189px" width="73" height="20"><rect x="0.30" y="0" width="0.45" height="19.5" fill="#e2e2e4"/><rect x="7.48" y="0" width="0.45" height="19.5" fill="#e2e2e4"/><rect x="14.66" y="0" width="0.45" height="19.5" fill="#e2e2e4"/><rect x="21.84" y="0" width="0.45" height="19.5" fill="#e2e2e4"/><rect x="29.02" y="0" width="0.45" height="19.5" fill="#e2e2e4"/><rect x="36.20" y="0" width="0.45" height="19.5" fill="#e2e2e4"/><rect x="43.38" y="0" width="0.45" height="19.5" fill="#e2e2e4"/><rect x="50.56" y="0" width="0.45" height="19.5" fill="#e2e2e4"/><rect x="57.74" y="0" width="0.45" height="19.5" fill="#e2e2e4"/><rect x="64.92" y="0" width="0.45" height="19.5" fill="#e2e2e4"/><rect x="72.10" y="0" width="0.45" height="19.5" fill="#e2e2e4"/><rect x="0" y="0" width="72" height="19.5" fill="#fff" style="display:none"/><rect x="0.75" y="8.2" width="5.1" height="11" fill="#5ab4dc"/><rect x="7.99" y="8.2" width="5.1" height="11" fill="#5e8ede"/><rect x="15.23" y="8.2" width="5.1" height="11" fill="#5d68d9"/><rect x="22.47" y="8.2" width="5.1" height="11" fill="#7b5fd6"/><rect x="29.71" y="8.2" width="5.1" height="11" fill="#9b5dd8"/><rect x="36.95" y="8.2" width="5.1" height="11" fill="#bf5ed6"/><rect x="44.19" y="8.2" width="5.1" height="11" fill="#d85ec9"/><rect x="51.43" y="8.2" width="5.1" height="11" fill="#dc5ea9"/><rect x="58.67" y="8.2" width="5.1" height="11" fill="#dc5e8c"/><rect x="65.91" y="8.2" width="5.1" height="11" fill="#dc6161"/><rect x="0" y="19.2" width="72" height="0.4" fill="#e0e0e2"/></svg>
<svg class="a" style="left:620.5px;top:179.6px" width="6" height="4"><rect x="0" y="0.6" width="3.6" height="2.8" rx="0.4" fill="#8a8a90"/><path d="M3.6 2 L5.2 1 V3 Z" fill="#8a8a90"/></svg>
<div class="t" style="left:627.00px;top:179.10px;font-size:5px;color:#858585;">대상 CCTV</div>
<div class="t" style="right:27.40px;top:179.10px;font-size:5px;color:#222;font-weight:bold;">0대</div>
<svg class="a" style="left:620.5px;top:187.7px" width="5" height="5"><path d="M0.8 0.4 H3.8 M0.8 4.4 H3.8 M1.2 0.4 Q1.2 2.4 2.3 2.4 Q3.4 2.4 3.4 0.4 M1.2 4.4 Q1.2 2.4 2.3 2.4 Q3.4 2.4 3.4 4.4" stroke="#9a9aa0" stroke-width="0.45" fill="none"/></svg>
<div class="t" style="left:627.00px;top:187.50px;font-size:5px;color:#858585;">발생 건수</div>
<div class="t" style="right:27.40px;top:187.50px;font-size:5px;color:#222;font-weight:bold;">0</div>
<svg class="a" style="left:620.5px;top:196.2px" width="5" height="5"><path d="M0.8 0.4 H3.8 M0.8 4.4 H3.8 M1.2 0.4 Q1.2 2.4 2.3 2.4 Q3.4 2.4 3.4 0.4 M1.2 4.4 Q1.2 2.4 2.3 2.4 Q3.4 2.4 3.4 4.4" stroke="#9a9aa0" stroke-width="0.45" fill="none"/></svg>
<div class="t" style="left:627.00px;top:196.00px;font-size:5px;color:#858585;">BPS</div>
<div class="t" style="left:662.00px;top:196.00px;font-size:5px;color:#858585;">최대</div>
<div class="t" style="right:27.40px;top:196.00px;font-size:5px;color:#222;font-weight:bold;">2.4M</div>
<div class="t" style="left:662.00px;top:204.10px;font-size:5px;color:#858585;">최소</div>
<div class="t" style="right:27.40px;top:204.10px;font-size:5px;color:#222;font-weight:bold;">0</div>
<!-- rows 2-3 -->
<div class="sub" style="left:176.2px;top:221.2px;width:159px;height:84.1px"></div>
<div class="ttl" style="left:185.5px;top:229.00px;font-size:5.7px">운영 현황 - 종류</div>
<div class="sub" style="left:340.3px;top:221.3px;width:189.4px;height:84px"></div>
<div class="ttl" style="left:349.8px;top:229.00px;font-size:5.7px">운영 현황 - 용도</div>
<div class="sub" style="left:536.4px;top:221.3px;width:163px;height:84px"></div>
<div class="ttl" style="left:545.8px;top:228.60px;font-size:5.7px">통신 이상 현황</div>
<svg class="a" style="left:0;top:0" width="720" height="460">
<circle cx="255.3" cy="269.4" r="27.7" fill="#6892dc"/>
<path d="M255.3 269.4 L255.3 241.7 A27.7 27.7 0 1 1 244.30 294.82 Z" fill="#63b4dc"/>
<path d="M223.9 263.8 H226.8" stroke="#ddd" stroke-width="0.5"/>
<path d="M284 275.3 H290" stroke="#ddd" stroke-width="0.5"/>
<circle cx="435.2" cy="269.2" r="27.7" fill="#66b5dc"/>
<path d="M437 296.8 L466 293.5" stroke="#ddd" stroke-width="0.5" fill="none"/>
</svg>
<div class="t" style="left:193.75px;top:262.30px;font-size:4.5px;color:#444;">회전형: 43.5%</div>
<div class="t" style="left:291.00px;top:273.80px;font-size:4.5px;color:#444;">고정형: 56.5%</div>
<div class="t" style="left:470.00px;top:292.50px;font-size:4.5px;color:#444;">방범: 100.0%</div>
<svg class="a" style="left:0;top:0" width="720" height="460"><rect x="548.3" y="243.8" width="144.20000000000005" height="0.45" fill="#ececec"/><rect x="548.3" y="259.3" width="144.20000000000005" height="0.45" fill="#ececec"/><rect x="548.3" y="275.3" width="144.20000000000005" height="0.45" fill="#ececec"/><rect x="548.3" y="291.0" width="144.20000000000005" height="0.45" fill="#ececec"/><rect x="548.10" y="244" width="0.45" height="47.2" fill="#efefef"/><rect x="557.11" y="244" width="0.45" height="47.2" fill="#efefef"/><rect x="566.12" y="244" width="0.45" height="47.2" fill="#efefef"/><rect x="575.14" y="244" width="0.45" height="47.2" fill="#efefef"/><rect x="584.15" y="244" width="0.45" height="47.2" fill="#efefef"/><rect x="593.16" y="244" width="0.45" height="47.2" fill="#efefef"/><rect x="602.17" y="244" width="0.45" height="47.2" fill="#efefef"/><rect x="611.19" y="244" width="0.45" height="47.2" fill="#efefef"/><rect x="620.20" y="244" width="0.45" height="47.2" fill="#efefef"/><rect x="629.21" y="244" width="0.45" height="47.2" fill="#efefef"/><rect x="638.22" y="244" width="0.45" height="47.2" fill="#efefef"/><rect x="647.24" y="244" width="0.45" height="47.2" fill="#efefef"/><rect x="656.25" y="244" width="0.45" height="47.2" fill="#efefef"/><rect x="665.26" y="244" width="0.45" height="47.2" fill="#efefef"/><rect x="674.27" y="244" width="0.45" height="47.2" fill="#efefef"/><rect x="683.29" y="244" width="0.45" height="47.2" fill="#efefef"/><rect x="692.30" y="244" width="0.45" height="47.2" fill="#efefef"/><rect x="549.76" y="268.70" width="6.1" height="22.50" fill="#5ab4dc" rx="0.5"/><rect x="558.77" y="267.91" width="6.1" height="23.29" fill="#5e8ede" rx="0.5"/><rect x="567.78" y="256.59" width="6.1" height="34.61" fill="#5d68d9" rx="0.5"/><rect x="576.79" y="252.50" width="6.1" height="38.70" fill="#7b5fd6" rx="0.5"/><rect x="585.81" y="269.02" width="6.1" height="22.18" fill="#9d5dd8" rx="0.5"/><rect x="594.82" y="269.02" width="6.1" height="22.18" fill="#c25ed8" rx="0.5"/><rect x="603.83" y="258.63" width="6.1" height="32.57" fill="#d85ec9" rx="0.5"/><rect x="612.84" y="249.82" width="6.1" height="41.38" fill="#dc5ea9" rx="0.5"/><rect x="621.86" y="264.30" width="6.1" height="26.90" fill="#dc5e8a" rx="0.5"/><rect x="630.87" y="267.13" width="6.1" height="24.07" fill="#dc5f62" rx="0.5"/><rect x="639.88" y="267.13" width="6.1" height="24.07" fill="#de8660" rx="0.5"/><rect x="648.89" y="268.23" width="6.1" height="22.97" fill="#dea25e" rx="0.5"/><rect x="657.91" y="266.66" width="6.1" height="24.54" fill="#dcc85e" rx="0.5"/><rect x="666.92" y="268.54" width="6.1" height="22.66" fill="#c8d85e" rx="0.5"/><rect x="675.93" y="268.54" width="6.1" height="22.66" fill="#9ad85e" rx="0.5"/><rect x="684.94" y="289.94" width="6.1" height="1.26" fill="#80d880" rx="0.5"/><rect x="548.3" y="291" width="144.20000000000005" height="0.5" fill="#d8d8d8"/></svg>
<div class="t" style="right:173.50px;top:242.95px;font-size:4.6px;color:#555;">3k</div>
<div class="t" style="right:173.50px;top:258.45px;font-size:4.6px;color:#555;">2k</div>
<div class="t" style="right:173.50px;top:274.45px;font-size:4.6px;color:#555;">1k</div>
<div class="t" style="right:173.50px;top:290.15px;font-size:4.6px;color:#555;">0</div>
<div class="t" style="left:532.81px;width:40px;text-align:center;top:293.55px;font-size:4.4px;color:#505050;">00:00</div>
<div class="t" style="left:550.83px;width:40px;text-align:center;top:293.55px;font-size:4.4px;color:#505050;">02:00</div>
<div class="t" style="left:568.86px;width:40px;text-align:center;top:293.55px;font-size:4.4px;color:#505050;">04:00</div>
<div class="t" style="left:586.88px;width:40px;text-align:center;top:293.55px;font-size:4.4px;color:#505050;">06:00</div>
<div class="t" style="left:604.91px;width:40px;text-align:center;top:293.55px;font-size:4.4px;color:#505050;">08:00</div>
<div class="t" style="left:622.93px;width:40px;text-align:center;top:293.55px;font-size:4.4px;color:#505050;">10:00</div>
<div class="t" style="left:640.96px;width:40px;text-align:center;top:293.55px;font-size:4.4px;color:#505050;">12:00</div>
<div class="t" style="left:658.98px;width:40px;text-align:center;top:293.55px;font-size:4.4px;color:#505050;">14:00</div>
<div class="sub" style="left:176.4px;top:310.8px;width:259.2px;height:103px"></div>
<div class="ttl" style="left:185.1px;top:318.60px;font-size:5.7px">대역폭 이상 발생 현황</div>
<div class="sub" style="left:440.8px;top:311.1px;width:258.7px;height:102.6px"></div>
<div class="ttl" style="left:450.7px;top:319.00px;font-size:5.7px">BPS 변동 추이</div>
<svg class="a" style="left:0;top:0" width="720" height="460"><rect x="195.2" y="332.2" width="229.8" height="0.45" fill="#ececec"/><rect x="195.2" y="346.1" width="229.8" height="0.45" fill="#ececec"/><rect x="195.2" y="360.3" width="229.8" height="0.45" fill="#ececec"/><rect x="195.2" y="374.3" width="229.8" height="0.45" fill="#ececec"/><rect x="195.2" y="388.6" width="229.8" height="0.45" fill="#ececec"/><rect x="195.00" y="332.4" width="0.45" height="56.4" fill="#efefef"/><rect x="209.36" y="332.4" width="0.45" height="56.4" fill="#efefef"/><rect x="223.72" y="332.4" width="0.45" height="56.4" fill="#efefef"/><rect x="238.09" y="332.4" width="0.45" height="56.4" fill="#efefef"/><rect x="252.45" y="332.4" width="0.45" height="56.4" fill="#efefef"/><rect x="266.81" y="332.4" width="0.45" height="56.4" fill="#efefef"/><rect x="281.18" y="332.4" width="0.45" height="56.4" fill="#efefef"/><rect x="295.54" y="332.4" width="0.45" height="56.4" fill="#efefef"/><rect x="309.90" y="332.4" width="0.45" height="56.4" fill="#efefef"/><rect x="324.26" y="332.4" width="0.45" height="56.4" fill="#efefef"/><rect x="338.62" y="332.4" width="0.45" height="56.4" fill="#efefef"/><rect x="352.99" y="332.4" width="0.45" height="56.4" fill="#efefef"/><rect x="367.35" y="332.4" width="0.45" height="56.4" fill="#efefef"/><rect x="381.71" y="332.4" width="0.45" height="56.4" fill="#efefef"/><rect x="396.07" y="332.4" width="0.45" height="56.4" fill="#efefef"/><rect x="410.44" y="332.4" width="0.45" height="56.4" fill="#efefef"/><rect x="424.80" y="332.4" width="0.45" height="56.4" fill="#efefef"/><rect x="198.10" y="345.65" width="4.1" height="43.15" fill="#ee8cc4"/><rect x="203.10" y="387.90" width="3.1" height="0.9" fill="#a8d8f0"/><rect x="212.46" y="346.50" width="4.1" height="42.30" fill="#ee8cc4"/><rect x="217.46" y="387.90" width="3.1" height="0.9" fill="#a8d8f0"/><rect x="226.82" y="346.50" width="4.1" height="42.30" fill="#ee8cc4"/><rect x="231.82" y="387.90" width="3.1" height="0.9" fill="#a8d8f0"/><rect x="241.19" y="346.50" width="4.1" height="42.30" fill="#ee8cc4"/><rect x="246.19" y="387.90" width="3.1" height="0.9" fill="#a8d8f0"/><rect x="255.55" y="345.65" width="4.1" height="43.15" fill="#ee8cc4"/><rect x="260.55" y="387.90" width="3.1" height="0.9" fill="#a8d8f0"/><rect x="269.91" y="346.50" width="4.1" height="42.30" fill="#ee8cc4"/><rect x="274.91" y="387.90" width="3.1" height="0.9" fill="#a8d8f0"/><rect x="284.27" y="346.50" width="4.1" height="42.30" fill="#ee8cc4"/><rect x="289.27" y="387.90" width="3.1" height="0.9" fill="#a8d8f0"/><rect x="298.64" y="345.09" width="4.1" height="43.71" fill="#ee8cc4"/><rect x="303.64" y="387.90" width="3.1" height="0.9" fill="#a8d8f0"/><rect x="313.00" y="346.50" width="4.1" height="42.30" fill="#ee8cc4"/><rect x="318.00" y="387.90" width="3.1" height="0.9" fill="#a8d8f0"/><rect x="327.36" y="345.65" width="4.1" height="43.15" fill="#ee8cc4"/><rect x="332.36" y="387.90" width="3.1" height="0.9" fill="#a8d8f0"/><rect x="341.72" y="347.06" width="4.1" height="41.74" fill="#ee8cc4"/><rect x="346.72" y="387.90" width="3.1" height="0.9" fill="#a8d8f0"/><rect x="356.09" y="346.50" width="4.1" height="42.30" fill="#ee8cc4"/><rect x="361.09" y="387.90" width="3.1" height="0.9" fill="#a8d8f0"/><rect x="370.45" y="345.09" width="4.1" height="43.71" fill="#ee8cc4"/><rect x="375.45" y="387.90" width="3.1" height="0.9" fill="#a8d8f0"/><rect x="384.81" y="346.50" width="4.1" height="42.30" fill="#ee8cc4"/><rect x="389.81" y="387.90" width="3.1" height="0.9" fill="#a8d8f0"/><rect x="399.17" y="346.50" width="4.1" height="42.30" fill="#ee8cc4"/><rect x="404.17" y="387.90" width="3.1" height="0.9" fill="#a8d8f0"/><rect x="413.54" y="387.39" width="4.1" height="1.41" fill="#ee8cc4"/><rect x="418.54" y="387.90" width="3.1" height="0.9" fill="#a8d8f0"/><rect x="195.2" y="388.6" width="229.8" height="0.5" fill="#d8d8d8"/><rect x="458.3" y="331.8" width="227.2" height="0.45" fill="#ececec"/><rect x="458.3" y="365.40000000000003" width="227.2" height="0.45" fill="#ececec"/><rect x="465.05" y="332" width="0.5" height="67.9" fill="#e3e3e3"/><rect x="480.25" y="332" width="0.5" height="67.9" fill="#e3e3e3"/><rect x="495.45" y="332" width="0.5" height="67.9" fill="#e3e3e3"/><rect x="510.65" y="332" width="0.5" height="67.9" fill="#e3e3e3"/><rect x="525.85" y="332" width="0.5" height="67.9" fill="#e3e3e3"/><rect x="541.05" y="332" width="0.5" height="67.9" fill="#e3e3e3"/><rect x="556.25" y="332" width="0.5" height="67.9" fill="#e3e3e3"/><rect x="571.45" y="332" width="0.5" height="67.9" fill="#e3e3e3"/><rect x="586.65" y="332" width="0.5" height="67.9" fill="#e3e3e3"/><rect x="601.85" y="332" width="0.5" height="67.9" fill="#e3e3e3"/><rect x="617.05" y="332" width="0.5" height="67.9" fill="#e3e3e3"/><rect x="632.25" y="332" width="0.5" height="67.9" fill="#e3e3e3"/><rect x="647.45" y="332" width="0.5" height="67.9" fill="#e3e3e3"/><rect x="662.65" y="332" width="0.5" height="67.9" fill="#e3e3e3"/><rect x="677.85" y="332" width="0.5" height="67.9" fill="#e3e3e3"/><rect x="458.3" y="399.4" width="227.2" height="0.8" fill="#e8b4a4"/><rect x="263.1" y="397.9" width="7.1" height="7.1" rx="1.2" fill="#ee8cc4"/><rect x="311.9" y="397.9" width="7.1" height="7.1" rx="1.2" fill="#5aafdc"/></svg>
<div class="t" style="right:526.70px;top:331.35px;font-size:4.6px;color:#555;">2k</div>
<div class="t" style="right:526.70px;top:345.25px;font-size:4.6px;color:#555;">1.5k</div>
<div class="t" style="right:526.70px;top:359.45px;font-size:4.6px;color:#555;">1k</div>
<div class="t" style="right:526.70px;top:373.45px;font-size:4.6px;color:#555;">500</div>
<div class="t" style="right:526.70px;top:387.75px;font-size:4.6px;color:#555;">0</div>
<div class="t" style="left:182.38px;width:40px;text-align:center;top:391.45px;font-size:4.4px;color:#505050;">00:00</div>
<div class="t" style="left:211.11px;width:40px;text-align:center;top:391.45px;font-size:4.4px;color:#505050;">02:00</div>
<div class="t" style="left:239.83px;width:40px;text-align:center;top:391.45px;font-size:4.4px;color:#505050;">04:00</div>
<div class="t" style="left:268.56px;width:40px;text-align:center;top:391.45px;font-size:4.4px;color:#505050;">06:00</div>
<div class="t" style="left:297.28px;width:40px;text-align:center;top:391.45px;font-size:4.4px;color:#505050;">08:00</div>
<div class="t" style="left:326.01px;width:40px;text-align:center;top:391.45px;font-size:4.4px;color:#505050;">10:00</div>
<div class="t" style="left:354.73px;width:40px;text-align:center;top:391.45px;font-size:4.4px;color:#505050;">12:00</div>
<div class="t" style="left:383.46px;width:40px;text-align:center;top:391.45px;font-size:4.4px;color:#505050;">14:00</div>
<div class="t" style="left:271.90px;top:399.25px;font-size:4.5px;color:#666;">BPS 초과</div>
<div class="t" style="left:320.60px;top:399.25px;font-size:4.5px;color:#666;">BPS 미달</div>
<div class="t" style="right:263.80px;top:330.95px;font-size:4.6px;color:#555;">1</div>
<div class="t" style="right:263.80px;top:364.45px;font-size:4.6px;color:#555;">0.5</div>
<div class="t" style="right:263.80px;top:398.85px;font-size:4.6px;color:#555;">0</div>
<div class="t" style="left:452.90px;width:40px;text-align:center;top:402.55px;font-size:4.4px;color:#505050;">01:00</div>
<div class="t" style="left:468.10px;width:40px;text-align:center;top:402.55px;font-size:4.4px;color:#505050;">02:00</div>
<div class="t" style="left:483.30px;width:40px;text-align:center;top:402.55px;font-size:4.4px;color:#505050;">03:00</div>
<div class="t" style="left:498.50px;width:40px;text-align:center;top:402.55px;font-size:4.4px;color:#505050;">04:00</div>
<div class="t" style="left:513.70px;width:40px;text-align:center;top:402.55px;font-size:4.4px;color:#505050;">05:00</div>
<div class="t" style="left:528.90px;width:40px;text-align:center;top:402.55px;font-size:4.4px;color:#505050;">06:00</div>
<div class="t" style="left:544.10px;width:40px;text-align:center;top:402.55px;font-size:4.4px;color:#505050;">07:00</div>
<div class="t" style="left:559.30px;width:40px;text-align:center;top:402.55px;font-size:4.4px;color:#505050;">08:00</div>
<div class="t" style="left:574.50px;width:40px;text-align:center;top:402.55px;font-size:4.4px;color:#505050;">09:00</div>
<div class="t" style="left:589.70px;width:40px;text-align:center;top:402.55px;font-size:4.4px;color:#505050;">10:00</div>
<div class="t" style="left:604.90px;width:40px;text-align:center;top:402.55px;font-size:4.4px;color:#505050;">11:00</div>
<div class="t" style="left:620.10px;width:40px;text-align:center;top:402.55px;font-size:4.4px;color:#505050;">12:00</div>
<div class="t" style="left:635.30px;width:40px;text-align:center;top:402.55px;font-size:4.4px;color:#505050;">13:00</div>
<div class="t" style="left:650.50px;width:40px;text-align:center;top:402.55px;font-size:4.4px;color:#505050;">14:00</div>
</body></html>
